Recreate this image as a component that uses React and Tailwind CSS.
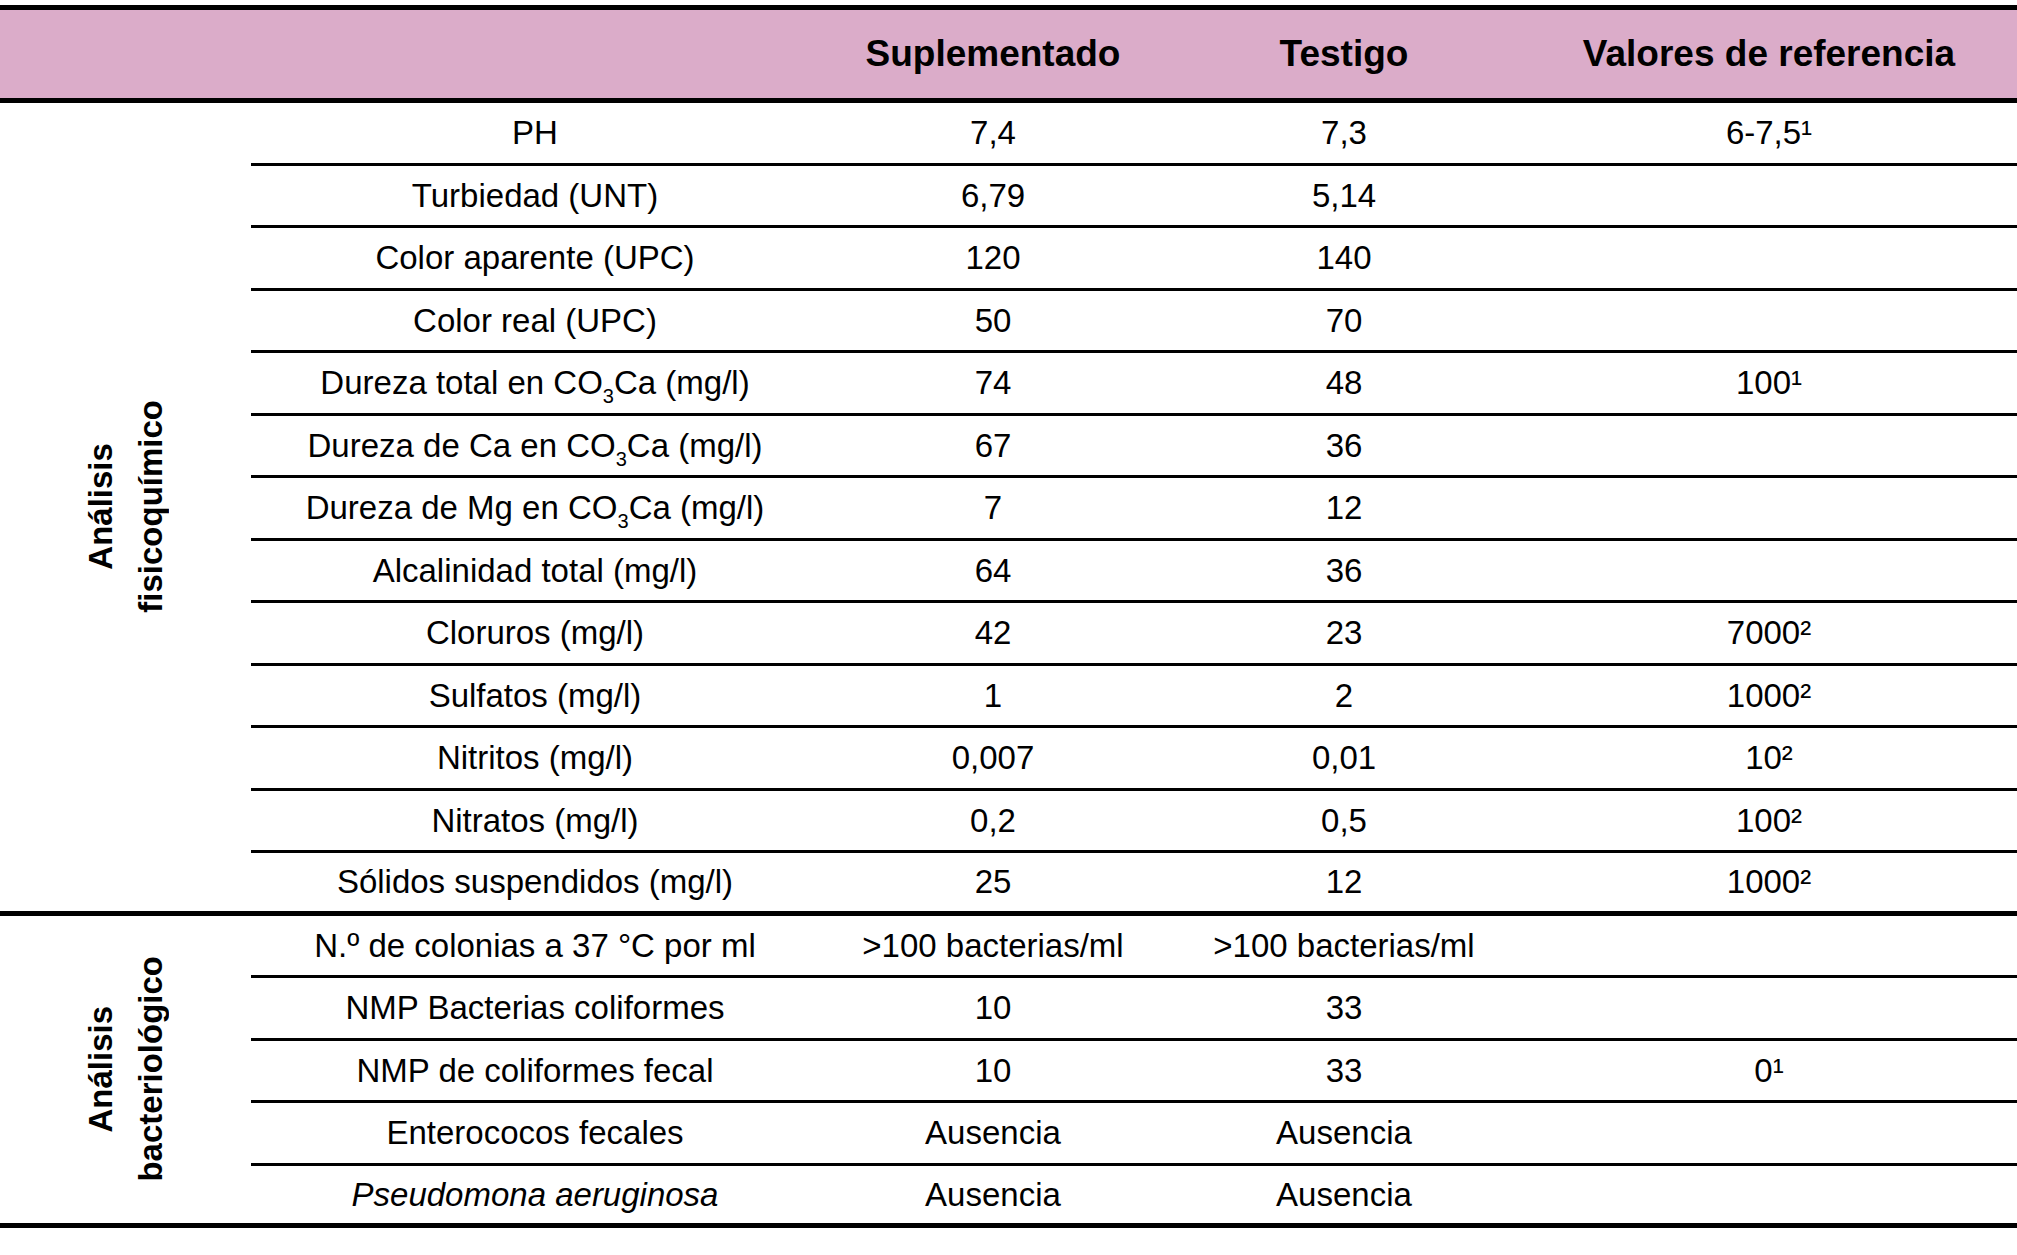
const Sub = () => <sub className="text-[20px] bottom-[-9px]">3</sub>;

const fisico = [
  ["PH", "7,4", "7,3", "6-7,5¹"],
  ["Turbiedad (UNT)", "6,79", "5,14", ""],
  ["Color aparente (UPC)", "120", "140", ""],
  ["Color real (UPC)", "50", "70", ""],
  [<>Dureza total en CO<Sub />Ca (mg/l)</>, "74", "48", "100¹"],
  [<>Dureza de Ca en CO<Sub />Ca (mg/l)</>, "67", "36", ""],
  [<>Dureza de Mg en CO<Sub />Ca (mg/l)</>, "7", "12", ""],
  ["Alcalinidad total (mg/l)", "64", "36", ""],
  ["Cloruros (mg/l)", "42", "23", "7000²"],
  ["Sulfatos (mg/l)", "1", "2", "1000²"],
  ["Nitritos (mg/l)", "0,007", "0,01", "10²"],
  ["Nitratos (mg/l)", "0,2", "0,5", "100²"],
  ["Sólidos suspendidos (mg/l)", "25", "12", "1000²"],
];

const bacterio = [
  ["N.º de colonias a 37 °C por ml", ">100 bacterias/ml", ">100 bacterias/ml", ""],
  ["NMP Bacterias coliformes", "10", "33", ""],
  ["NMP de coliformes fecal", "10", "33", "0¹"],
  ["Enterococos fecales", "Ausencia", "Ausencia", ""],
  [<i>Pseudomona aeruginosa</i>, "Ausencia", "Ausencia", ""],
];

const Section = ({ title, sub, rows }) => {
  return (
    <div className="flex border-b-[5px] border-black">
      <div className="w-[251px] shrink-0 flex items-center justify-center">
        <div className="[writing-mode:vertical-rl] rotate-180 text-center font-bold text-[33px] leading-[50px]">
          <div>{title}</div>
          <div>{sub}</div>
        </div>
      </div>
      <div className="flex-1">
        {rows.map((r, i) => (
          <div
            key={i}
            className={
              i === rows.length - 1
                ? "grid grid-cols-[568px_348px_354px_496px] h-[57.5px] items-center text-center"
                : "grid grid-cols-[568px_348px_354px_496px] h-[62.5px] items-center text-center border-b-[3px] border-black"
            }
          >
            <div>{r[0]}</div>
            <div>{r[1]}</div>
            <div>{r[2]}</div>
            <div>{r[3]}</div>
          </div>
        ))}
      </div>
    </div>
  );
};

const App = () => {
  return (
    <div className="w-[2017px] min-h-screen bg-white pt-[5px] text-black text-[33px] font-['Liberation_Sans',Arial,sans-serif]">
      <div className="grid grid-cols-[251px_568px_348px_354px_496px] h-[98px] items-center text-center bg-[#dbacc9] border-y-[5px] border-black font-bold text-[37px]">
        <div></div>
        <div></div>
        <div>Suplementado</div>
        <div>Testigo</div>
        <div>Valores de referencia</div>
      </div>
      <Section title="Análisis" sub="fisicoquímico" rows={fisico} />
      <Section title="Análisis" sub="bacteriológico" rows={bacterio} />
    </div>
  );
};

export default App;
